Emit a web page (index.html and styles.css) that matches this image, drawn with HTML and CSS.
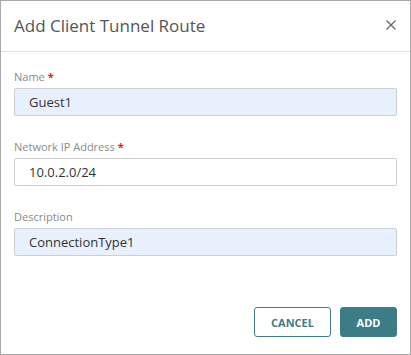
FILE: index.html
```html
<!DOCTYPE html>
<html lang="en">
<head>
  <meta charset="UTF-8" />
  <meta name="viewport" content="width=device-width, initial-scale=1" />
  <title>Add Client Tunnel Route</title>
  <link rel="stylesheet" href="styles.css">
</head>
<body>
  <div class="dialog">
    <div class="dialog-header">
      <h2>Add Client Tunnel Route</h2>
      <span class="close-btn">
        <svg width="10" height="10" viewBox="0 0 10 10">
          <path d="M0.5 0.5 L9.5 9.5 M9.5 0.5 L0.5 9.5" stroke="#666" stroke-width="1.3" fill="none"/>
        </svg>
      </span>
    </div>

    <form class="dialog-body">
      <div class="field">
        <label for="name">Name <span class="req">*</span></label>
        <input type="text" id="name" class="filled" value="Guest1">
      </div>

      <div class="field">
        <label for="network">Network IP Address <span class="req">*</span></label>
        <input type="text" id="network" value="10.0.2.0/24">
      </div>

      <div class="field">
        <label for="desc">Description</label>
        <input type="text" id="desc" class="filled" value="ConnectionType1">
      </div>
    </form>

    <div class="dialog-footer">
      <button type="button" class="btn btn-outline">CANCEL</button>
      <button type="button" class="btn btn-primary">ADD</button>
    </div>
  </div>
</body>
</html>
```

FILE: styles.css
```css
* { box-sizing: border-box; }

body {
  margin: 0;
  font-family: 'Open Sans', 'Noto Sans', sans-serif;
  background: #fff;
}

.dialog {
  width: 411px;
  height: 355px;
  border: 1px solid #a8a8a8;
  background: #fff;
  display: flex;
  flex-direction: column;
}

.dialog-header {
  height: 51px;
  border-bottom: 1px solid #e2e2e2;
  display: flex;
  align-items: center;
  justify-content: space-between;
  padding: 0 14px 0 13px;
  flex-shrink: 0;
}

.dialog-header h2 {
  margin: 0;
  font-size: 17px;
  font-weight: 400;
  color: #555;
  line-height: 24px;
}

.close-btn {
  display: flex;
  width: 10px;
  height: 10px;
  margin-top: -2px;
  cursor: pointer;
}

.dialog-body {
  padding: 18px 13px 0 13px;
  display: flex;
  flex-direction: column;
  gap: 24px;
}

.field label {
  display: block;
  font-size: 11px;
  line-height: 14px;
  color: #8a8a8a;
  margin-bottom: 4px;
}

.req {
  color: #d62a2a;
  font-weight: bold;
}

.field input {
  width: 100%;
  height: 28px;
  padding: 0 14px;
  border: 1px solid #cfcfcf;
  border-radius: 2px;
  font-family: inherit;
  font-size: 13px;
  color: #333;
  background: #fff;
  outline: none;
}

.field input.filled {
  background: #e8f0fe;
}

.dialog-footer {
  margin-top: auto;
  display: flex;
  justify-content: flex-end;
  gap: 9px;
  padding: 0 13px 17px;
}

.btn {
  height: 30px;
  border-radius: 3px;
  font-family: inherit;
  font-size: 11px;
  font-weight: 700;
  cursor: pointer;
}

.btn-outline {
  width: 77px;
  background: #fff;
  color: #3b7c87;
  border: 1px solid #3b7c87;
}

.btn-primary {
  width: 57px;
  background: #3b7c87;
  color: #fff;
  border: 1px solid #3b7c87;
}
```
